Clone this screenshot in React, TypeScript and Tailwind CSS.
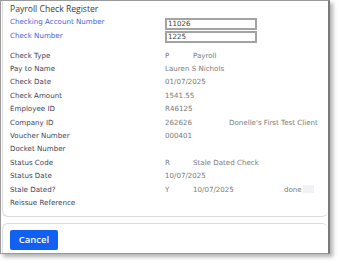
import React from "react";

const lbl = "text-[#3d3f58]";
const val = "text-[#7b7b7b]";

type Row = { label: string; cells: React.ReactNode };

export default function App() {
  const rows: Row[] = [
    {
      label: "Check Type",
      cells: (
        <>
          <span className={`${val} col-start-2`}>P</span>
          <span className={`${val} col-start-3 col-span-3`}>Payroll</span>
        </>
      ),
    },
    { label: "Pay to Name", cells: <span className={`${val} col-start-2 col-span-4`}>Lauren S Nichols</span> },
    { label: "Check Date", cells: <span className={`${val} col-start-2 col-span-4`}>01/07/2025</span> },
    { label: "Check Amount", cells: <span className={`${val} col-start-2 col-span-4`}>1541.55</span> },
    { label: "Employee ID", cells: <span className={`${val} col-start-2 col-span-4`}>R46125</span> },
    {
      label: "Company ID",
      cells: (
        <>
          <span className={`${val} col-start-2 col-span-2`}>262626</span>
          <span className={`${val} col-start-4 col-span-2`}>Donelle's First Test Client</span>
        </>
      ),
    },
    { label: "Voucher Number", cells: <span className={`${val} col-start-2 col-span-4`}>000401</span> },
    { label: "Docket Number", cells: null },
    {
      label: "Status Code",
      cells: (
        <>
          <span className={`${val} col-start-2`}>R</span>
          <span className={`${val} col-start-3 col-span-3`}>Stale Dated Check</span>
        </>
      ),
    },
    { label: "Status Date", cells: <span className={`${val} col-start-2 col-span-4`}>10/07/2025</span> },
    {
      label: "Stale Dated?",
      cells: (
        <>
          <span className={`${val} col-start-2`}>Y</span>
          <span className={`${val} col-start-3 col-span-2`}>10/07/2025</span>
          <span className={`${val} col-start-5 flex items-center`}>
            done
            <span className="ml-[1px] inline-block h-[8px] w-[11px] bg-[#f1f2f6]" />
          </span>
        </>
      ),
    },
    { label: "Reissue Reference", cells: null },
  ];

  return (
    <div className="h-[264px] w-[340px] bg-white">
      <div
        className="flex h-[254px] w-[330px] flex-col border border-[#9a9a9a] border-r-2 border-r-[#7a7a7a] bg-white shadow-[3px_3px_4px_rgba(0,0,0,0.3)]"
        style={{ fontFamily: '"DejaVu Sans", Verdana, sans-serif' }}
      >
        <div className="ml-[1px] flex h-[216px] flex-col rounded-b-[6px] border-b border-l border-[#dcdcdc] pl-[7px]">
          <div
            className="mt-[1px] h-[14px] text-[8.6px] leading-[14px] text-[#3a3a3a]"
            style={{ fontFamily: '"Open Sans", sans-serif' }}
          >
            Payroll Check Register
          </div>
          <div className="flex flex-col text-[7.1px]">
            <div className="flex h-[13.5px] items-start">
              <span className="mt-[1px] w-[155px] leading-[10px] text-[#4463d8]">Checking Account Number</span>
              <div className="mt-[2px] flex h-[12px] w-[92px] items-center border-2 border-[#a3a3a3] px-[1px] leading-none text-[#444]">
                11026
              </div>
            </div>
            <div className="flex h-[13.5px] items-start">
              <span className="mt-[1px] w-[155px] leading-[10px] text-[#4463d8]">Check Number</span>
              <div className="mt-[1px] flex h-[12px] w-[92px] items-center border-2 border-[#a3a3a3] px-[1px] leading-none text-[#444]">
                1225
              </div>
            </div>
          </div>
          <div className="mt-[5.5px] flex flex-col text-[7.1px]">
            {rows.map((r) => (
              <div
                key={r.label}
                className="grid h-[13.4px] grid-cols-[155px_28px_36px_55px_60px] items-center whitespace-nowrap leading-none"
              >
                <span className={`${lbl} col-start-1`}>{r.label}</span>
                {r.cells}
              </div>
            ))}
          </div>
        </div>
        <div className="ml-[1px] mt-[6px] flex flex-1 rounded-t-[6px] border-l border-t border-[#dcdcdc] pl-[7px] pt-[6px]">
          <button
            className="h-[20px] w-[48px] rounded-[2px] bg-[#1160f2] text-[9.5px] font-semibold text-white"
            style={{ fontFamily: '"Open Sans", sans-serif' }}
          >
            Cancel
          </button>
        </div>
      </div>
    </div>
  );
}
